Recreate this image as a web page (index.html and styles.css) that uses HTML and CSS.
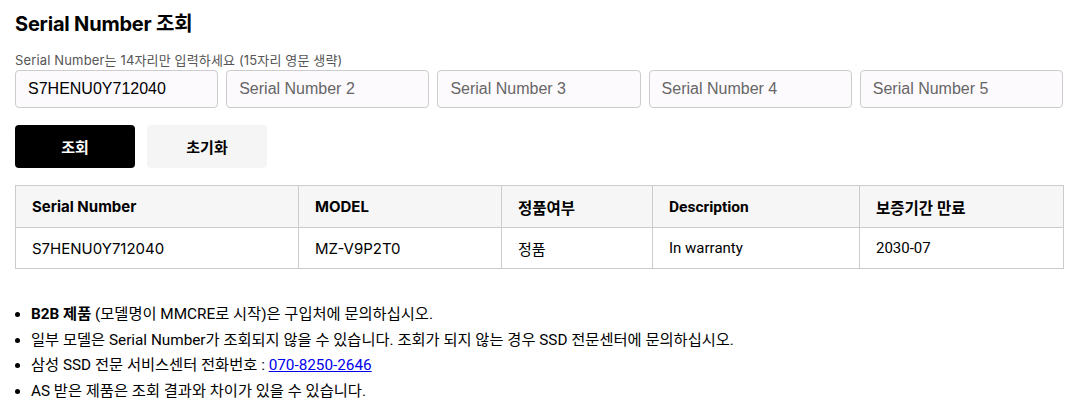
FILE: index.html
```html
<!DOCTYPE html>
<html lang="ko">
<head>
<meta charset="utf-8">
<link rel="stylesheet" href="styles.css">
</head>
<body>
<div class="page">
  <h1 class="title">Serial Number 조회</h1>
  <p class="hint">Serial Number는 14자리만 입력하세요 (15자리 영문 생략)</p>
  <div class="inputs">
    <input class="sn" type="text" value="S7HENU0Y712040">
    <input class="sn" type="text" placeholder="Serial Number 2">
    <input class="sn" type="text" placeholder="Serial Number 3">
    <input class="sn" type="text" placeholder="Serial Number 4">
    <input class="sn" type="text" placeholder="Serial Number 5">
  </div>
  <div class="buttons">
    <button class="btn btn-primary">조회</button>
    <button class="btn btn-secondary">초기화</button>
  </div>
  <table class="result">
    <colgroup>
      <col class="c1"><col class="c2"><col class="c3"><col class="c4"><col class="c5">
    </colgroup>
    <thead>
      <tr>
        <th>Serial Number</th>
        <th>MODEL</th>
        <th class="alt">정품여부</th>
        <th class="alt">Description</th>
        <th class="alt">보증기간 만료</th>
      </tr>
    </thead>
    <tbody>
      <tr>
        <td>S7HENU0Y712040</td>
        <td>MZ-V9P2T0</td>
        <td class="alt">정품</td>
        <td class="alt">In warranty</td>
        <td class="alt">2030-07</td>
      </tr>
    </tbody>
  </table>
  <ul class="notes">
    <li><b>B2B 제품</b> (모델명이 MMCRE로 시작)은 구입처에 문의하십시오.</li>
    <li>일부 모델은 Serial Number가 조회되지 않을 수 있습니다. 조회가 되지 않는 경우 SSD 전문센터에 문의하십시오.</li>
    <li>삼성 SSD 전문 서비스센터 전화번호 : <a href="#">070-8250-2646</a></li>
    <li>AS 받은 제품은 조회 결과와 차이가 있을 수 있습니다.</li>
  </ul>
</div>
</body>
</html>
```

FILE: styles.css
```css
* { box-sizing: border-box; }
html, body { margin: 0; padding: 0; background: #fff; }
body {
  font-family: Inter, "Noto Sans CJK KR", sans-serif;
  color: #000;
}
.page { padding: 12px 16px 0 15px; }
.title {
  margin: 0;
  font-size: 20px;
  font-weight: 700;
  line-height: 24px;
  letter-spacing: -0.2px;
}
.hint {
  margin: 16px 0 0;
  font-size: 13px;
  line-height: 16px;
  letter-spacing: 0.15px;
  color: #555;
}
.inputs {
  display: grid;
  grid-template-columns: repeat(5, 1fr);
  gap: 8px;
  margin-top: 2px;
}
.sn {
  height: 38px;
  width: 100%;
  border: 1px solid #ccc;
  border-radius: 4px;
  background: #fdfafd;
  padding: 0 12px;
  font-family: "Liberation Sans", Arial, sans-serif;
  font-size: 16px;
  color: #000;
  outline: none;
}
.sn::placeholder { color: #666; }
.buttons {
  display: flex;
  gap: 12px;
  margin-top: 17px;
}
.btn {
  width: 120px;
  height: 43px;
  border: none;
  border-radius: 4px;
  font-family: Inter, "Noto Sans CJK KR", sans-serif;
  font-size: 15px;
  font-weight: 700;
}
.btn-primary { background: #000; color: #fff; }
.btn-secondary { background: #f5f5f5; color: #000; }
.result {
  margin-top: 17px;
  width: 1048px;
  border-collapse: collapse;
  table-layout: fixed;
}
.c1 { width: 283px; }
.c2 { width: 203px; }
.c3 { width: 151px; }
.c4 { width: 207px; }
.c5 { width: 204px; }
.result th, .result td {
  border: 1px solid #ccc;
  text-align: left;
  padding: 0 0 0 16px;
  font-size: 15px;
  color: #000;
}
.result th {
  height: 42px;
  background: #f6f6f6;
  font-weight: 700;
}
.result td {
  height: 41px;
  font-weight: 400;
}
.result .alt { font-family: Roboto, "Noto Sans CJK KR", sans-serif; }
.result th.alt { font-size: 15.5px; }
.notes {
  margin: 33px 0 0;
  padding: 0 0 0 16px;
  font-family: Roboto, "Noto Sans CJK KR", sans-serif;
  font-size: 15.3px;
  line-height: 25.5px;
  color: #000;
}
.notes a { color: #0000ee; text-decoration: underline; }
```
